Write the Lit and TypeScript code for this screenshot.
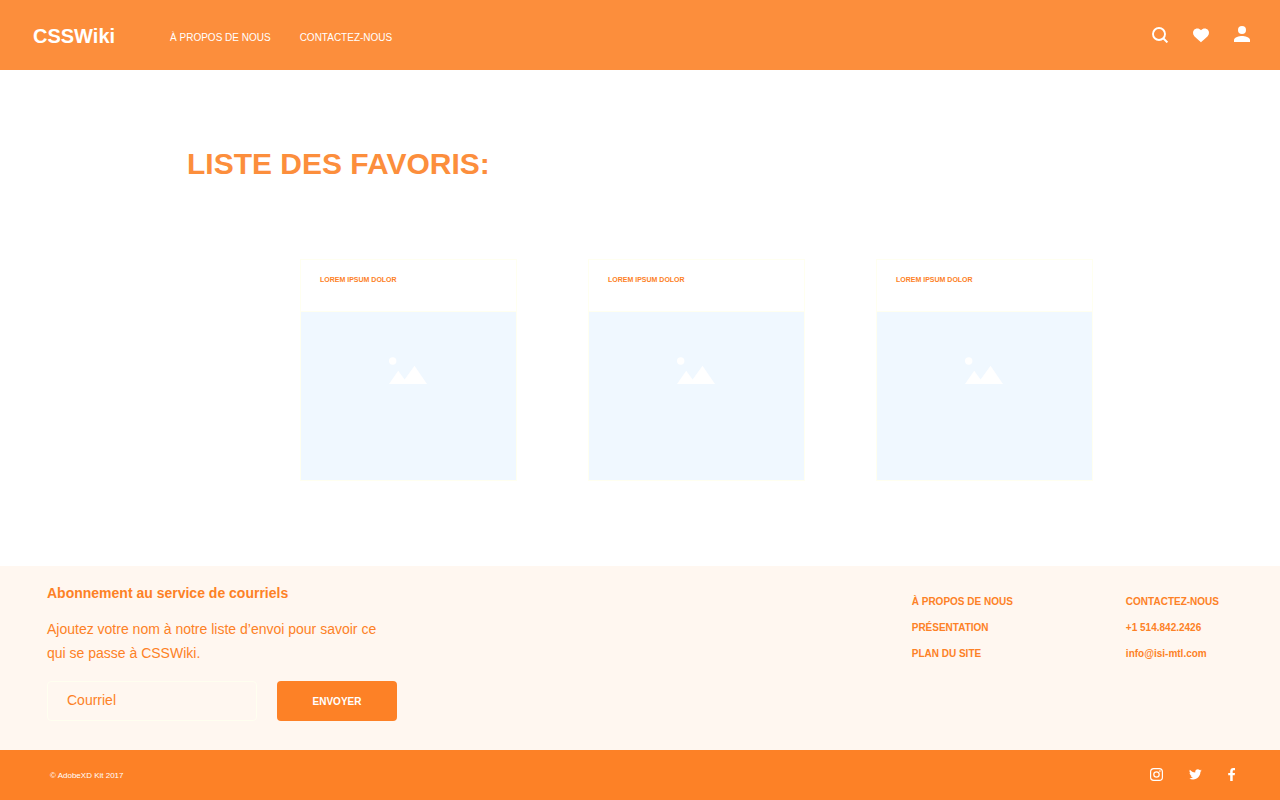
import { LitElement, html, css, svg } from "lit";
import { customElement, property } from "lit/decorators.js";

const CARDS = ["LOREM IPSUM DOLOR", "LOREM IPSUM DOLOR", "LOREM IPSUM DOLOR"];

const icons = {
  search: svg`<circle cx="7" cy="8" r="6" fill="none" stroke="currentColor" stroke-width="1.900"/><path d="M11 12l4.400 4.400" fill="none" stroke="currentColor" stroke-width="2"/>`,
  heart: svg`<path d="M8 16.200C7.600 15.800 2.400 11.300 1.200 9.900C-.3 8.100-.4 5.600 1 4C2.700 2 6 1.900 8 4.200C10 1.900 13.300 2 15 4C16.400 5.600 16.300 8.100 14.800 9.900C13.600 11.300 8.400 15.800 8 16.200Z" fill="currentColor"/>`,
  user: svg`<circle cx="8" cy="4" r="4" fill="currentColor"/><path d="M0 16v-2c0-2.700 5.300-4 8-4s8 1.300 8 4v2z" fill="currentColor"/>`,
  instagram: svg`<rect x=".6" y=".6" width="11.800" height="11.800" rx="3.200" fill="none" stroke="currentColor" stroke-width="1.200"/><circle cx="6.500" cy="6.500" r="2.700" fill="none" stroke="currentColor" stroke-width="1.200"/><circle cx="9.900" cy="3.100" r=".8" fill="currentColor"/>`,
  twitter: svg`<path transform="translate(0 0) scale(.53)" d="M23.950 4.570a10 10 0 01-2.820.780 4.960 4.960 0 002.160-2.720c-.950.550-2 .950-3.130 1.180a4.920 4.920 0 00-8.380 4.480C7.690 8.100 4.070 6.130 1.640 3.160a4.820 4.820 0 00-.670 2.480c0 1.710.870 3.210 2.190 4.100a4.900 4.900 0 01-2.230-.620v.060a4.920 4.920 0 003.950 4.830 5 5 0 01-2.210.080 4.940 4.940 0 004.600 3.420A9.870 9.870 0 010 19.540a13.990 13.990 0 007.560 2.210c9.050 0 14-7.500 14-13.980 0-.210 0-.420-.020-.630a9.940 9.940 0 002.460-2.550z" fill="currentColor"/>`,
  facebook: svg`<path d="M2.200 13V7.300H.2V4.900h2V3.300C2.200 1.200 3.400 0 5.300 0h1.700v2.300H5.800C5 2.300 4.700 2.700 4.700 3.400v1.500H7L6.700 7.300h-2V13z" fill="currentColor"/>`,
};

@customElement("favorite-card")
class FavoriteCard extends LitElement {
  @property() heading = "";

  static styles = css`
    :host {
      display: block;
      border: 1px solid #fffff0;
      background: #fff;
    }
    .heading {
      margin: 0;
      height: 52px;
      box-sizing: border-box;
      padding: 15px 19px 0;
      font-size: 7px;
      line-height: 10px;
      font-weight: 700;
      color: #fd8126;
      border-bottom: 1px solid #fffff0;
    }
    .picture {
      height: 168px;
      box-sizing: border-box;
      padding: 45px 2px 0 0;
      background: #f0f8ff;
      display: flex;
      justify-content: center;
    }
    svg {
      display: block;
    }
  `;

  render() {
    return html`
      <h2 class="heading">${this.heading}</h2>
      <div class="picture">
        <svg width="38" height="27" viewBox="0 0 38 27" fill="#fff" aria-hidden="true">
          <circle cx="3.7" cy="4" r="3.7" />
          <path d="M0 27L9.200 13.800L15.600 22.500L25.500 8.800L38 27Z" />
        </svg>
      </div>
    `;
  }
}

@customElement("app-root")
class AppRoot extends LitElement {
  static styles = css`
    :host {
      display: flex;
      flex-direction: column;
      min-height: 100vh;
      background: #fff;
      color: #fd8126;
      font-family: "Liberation Sans", Arial, sans-serif;
    }
    a {
      color: inherit;
      text-decoration: none;
    }
    svg {
      display: block;
    }
    .top {
      display: flex;
      align-items: center;
      height: 70px;
      box-sizing: border-box;
      padding: 2px 30px 0 33px;
      background: #fc8e3c;
      color: #fff;
    }
    .brand {
      font-size: 20px;
      line-height: 24px;
      font-weight: 700;
    }
    .nav {
      display: flex;
      gap: 29px;
      margin-left: 55px;
      padding-top: 4px;
      font-size: 10px;
      line-height: 12px;
    }
    .tools {
      display: flex;
      gap: 24px;
      margin-left: auto;
      padding-bottom: 3px;
    }
    .tool {
      padding: 0;
      border: 0;
      background: none;
      color: inherit;
      cursor: pointer;
    }
    .main {
      flex: 1;
      padding: 76px 187px 84px;
    }
    .title {
      margin: 0;
      font-size: 30px;
      line-height: 36px;
      font-weight: 700;
      color: #fc8e3c;
    }
    .cards {
      display: grid;
      grid-template-columns: repeat(3, 1fr);
      gap: 71px;
      margin: 77px 0 0 113px;
    }
    .info {
      display: flex;
      padding: 17px 61px 29px 47px;
      background: #fff7f0;
    }
    .signup {
      width: 350px;
      font-size: 14px;
      line-height: 24px;
    }
    .signup-title {
      margin: 0;
      font-size: 14px;
      line-height: 20px;
    }
    .signup-text {
      margin: 14px 0 16px;
    }
    .form {
      display: flex;
      gap: 20px;
    }
    .email {
      flex: 1;
      min-width: 0;
      height: 40px;
      box-sizing: border-box;
      padding: 0 19px 2px;
      border: 1px solid #fffff0;
      border-radius: 4px;
      background: transparent;
      color: inherit;
      font: inherit;
    }
    .email::placeholder {
      color: inherit;
      opacity: 1;
    }
    .send {
      width: 120px;
      height: 40px;
      padding: 0;
      border: 0;
      border-radius: 4px;
      background: #fd8126;
      color: #fff;
      font: 700 10px "Liberation Sans", Arial, sans-serif;
      cursor: pointer;
    }
    .links {
      display: flex;
      gap: 113px;
      margin-left: auto;
      padding-top: 13px;
      font-size: 10px;
      line-height: 12px;
      font-weight: 700;
    }
    .column {
      display: flex;
      flex-direction: column;
      gap: 14px;
    }
    .bottom {
      display: flex;
      align-items: center;
      justify-content: space-between;
      height: 50px;
      padding: 0 45px 0 50px;
      background: #fd8126;
      color: #fff;
      font-size: 8px;
      line-height: 10px;
    }
    .copyright {
      padding-top: 2px;
    }
    .social {
      display: flex;
      align-items: center;
      gap: 26px;
      padding-bottom: 2px;
    }
  `;

  render() {
    return html`
      <header class="top">
        <a class="brand" href="#">CSSWiki</a>
        <nav class="nav">
          <a href="#">À PROPOS DE NOUS</a>
          <a href="#">CONTACTEZ-NOUS</a>
        </nav>
        <div class="tools">
          <button class="tool" aria-label="Rechercher"><svg width="17" height="17" viewBox="0 0 17 17">${icons.search}</svg></button>
          <button class="tool" aria-label="Favoris"><svg width="16" height="17" viewBox="0 0 16 17">${icons.heart}</svg></button>
          <button class="tool" aria-label="Compte"><svg width="17" height="17" viewBox="-1 0 17 17">${icons.user}</svg></button>
        </div>
      </header>

      <main class="main">
        <h1 class="title">LISTE DES FAVORIS:</h1>
        <div class="cards">
          ${CARDS.map((heading) => html`<favorite-card .heading=${heading}></favorite-card>`)}
        </div>
      </main>

      <footer>
        <div class="info">
          <section class="signup">
            <h2 class="signup-title">Abonnement au service de courriels</h2>
            <p class="signup-text">Ajoutez votre nom à notre liste d’envoi pour savoir ce qui se passe à CSSWiki.</p>
            <form class="form" @submit=${(e: Event) => e.preventDefault()}>
              <input class="email" type="email" placeholder="Courriel" aria-label="Courriel" />
              <button class="send">ENVOYER</button>
            </form>
          </section>
          <div class="links">
            <nav class="column">
              <a href="#">À PROPOS DE NOUS</a>
              <a href="#">PRÉSENTATION</a>
              <a href="#">PLAN DU SITE</a>
            </nav>
            <div class="column">
              <a href="#">CONTACTEZ-NOUS</a>
              <a href="tel:+15148422426">+1 514.842.2426</a>
              <a href="mailto:info@isi-mtl.com">info@isi-mtl.com</a>
            </div>
          </div>
        </div>
        <div class="bottom">
          <span class="copyright">© AdobeXD Kit 2017</span>
          <div class="social">
            <a href="#" aria-label="Instagram"><svg width="13" height="13" viewBox="0 0 13 13">${icons.instagram}</svg></a>
            <a href="#" aria-label="Twitter"><svg width="13" height="13" viewBox="0 0 13 13">${icons.twitter}</svg></a>
            <a href="#" aria-label="Facebook"><svg width="7" height="13" viewBox="0 0 7 13">${icons.facebook}</svg></a>
          </div>
        </div>
      </footer>
    `;
  }
}
